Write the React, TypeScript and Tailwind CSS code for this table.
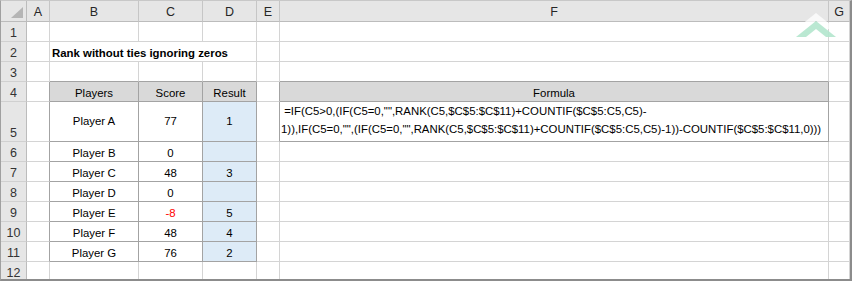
import React from 'react';

const letters = ['A', 'B', 'C', 'D', 'E', 'F', 'G'];

const table: Record<number, string[]> = {
  4: ['Players', 'Score', 'Result'],
  5: ['Player A', '77', '1'],
  6: ['Player B', '0', ''],
  7: ['Player C', '48', '3'],
  8: ['Player D', '0', ''],
  9: ['Player E', '-8', '5'],
  10: ['Player F', '48', '4'],
  11: ['Player G', '76', '2'],
};

const formula1 = ' =IF(C5>0,(IF(C5=0,"",RANK(C5,$C$5:$C$11)+COUNTIF($C$5:C5,C5)-';
const formula2 = '1)),IF(C5=0,"",(IF(C5=0,"",RANK(C5,$C$5:$C$11)+COUNTIF($C$5:C5,C5)-1))-COUNTIF($C$5:$C$11,0)))';

// c: 1 = A ... 7 = G
function borders(r: number, c: number) {
  const inTable = r >= 4 && r <= 11 && c >= 2 && c <= 4;
  const inFormula = (r === 4 || r === 5) && c === 6;
  const darkRight = inTable || inFormula || (c === 1 && r >= 4 && r <= 11) || (c === 5 && (r === 4 || r === 5));
  const darkBottom = inTable || inFormula || (r === 3 && ((c >= 2 && c <= 4) || c === 6));
  return `border-r border-b ${darkRight ? 'border-r-[#a3a3a3]' : 'border-r-[#d4d4d4]'} ${
    darkBottom ? 'border-b-[#a3a3a3]' : 'border-b-[#d4d4d4]'
  }`;
}

function bg(r: number, c: number) {
  if (r === 4 && ((c >= 2 && c <= 4) || c === 6)) return 'bg-[#d9d9d9]';
  if (r >= 5 && r <= 11 && c === 4) return 'bg-[#ddebf7]';
  return 'bg-white';
}

function Logo() {
  return (
    <svg className="absolute left-[790px] top-[6px]" width="50" height="34" viewBox="790 6 50 34">
      <polygon points="815,12 835,28 825,28 815,20 805,28 795,28" fill="#ffffff" opacity="0.75" />
      <polygon points="815,20 835,36 825,36 815,28 805,36 795,36" fill="#b2e6cd" opacity="0.9" />
    </svg>
  );
}

function Row({ r }: { r: number }) {
  const cells: React.ReactNode[] = [];
  cells.push(
    <div
      key="n"
      className="flex items-end justify-center pb-[1px] leading-[14px] text-[12.5px] bg-[#e6e6e6] text-[#333] border-r border-b border-r-[#bcbcbc] border-b-[#d0d0d0]"
    >
      {r}
    </div>
  );
  for (let c = 1; c <= 7; c++) {
    if (r === 2 && (c === 3 || c === 4)) continue;
    let content: React.ReactNode = null;
    let extra = 'items-end pb-[1px] leading-[13px]';
    if (r === 2 && c === 2) {
      content = <span className="font-bold whitespace-nowrap pl-[2px]">Rank without ties ignoring zeros</span>;
    } else if (table[r] && c >= 2 && c <= 4) {
      const v = table[r][c - 2];
      content = v;
      extra = `${r === 5 ? 'items-center' : 'items-end pb-[1px]'} justify-center leading-[13px] ${
        v === '-8' ? 'text-[#ff0000]' : ''
      }`;
    } else if (r === 4 && c === 6) {
      content = 'Formula';
      extra = 'items-end justify-center pb-[1px] leading-[13px]';
    } else if (r === 5 && c === 6) {
      content = (
        <div className="pl-[1px] leading-[18px] whitespace-pre">
          <div>{formula1}</div>
          <div>{formula2}</div>
        </div>
      );
      extra = 'items-start';
    }
    cells.push(
      <div
        key={c}
        className={`flex min-w-0 ${extra} ${borders(r, c)} ${bg(r, c)} ${r === 2 && c === 2 ? 'col-span-3' : ''}`}
      >
        {content}
      </div>
    );
  }
  return <>{cells}</>;
}

export default function App() {
  return (
    <div className="relative w-[852px] h-[281px] overflow-hidden bg-white border-l border-t border-r-2 border-b-2 border-l-[#a0a0a0] border-t-[#c8c8c8] border-r-[#8c8c8c] border-b-[#8c8c8c] font-['Liberation_Sans',Arial,sans-serif] text-[11.4px] text-black">
      <div className="grid grid-cols-[26px_23px_89px_64px_54px_23px_549px_21px] grid-rows-[21px_repeat(4,20px)_40px_repeat(7,20px)]">
        {/* column headers */}
        <div className="relative bg-[#e6e6e6] border-r border-b border-r-[#bcbcbc] border-b-[#bcbcbc]">
          <svg className="absolute right-[3px] bottom-[3px]" width="12" height="11" viewBox="0 0 12 11">
            <polygon points="12,0 12,11 0,11" fill="#b5b5b5" />
          </svg>
        </div>
        {letters.map((l) => (
          <div
            key={l}
            className="flex items-end justify-center pb-[2px] leading-[14px] text-[12.5px] bg-[#e6e6e6] text-[#262626] border-r border-b border-r-[#c6c6c6] border-b-[#bcbcbc]"
          >
            {l}
          </div>
        ))}
        {Array.from({ length: 12 }, (_, i) => (
          <Row key={i + 1} r={i + 1} />
        ))}
      </div>
      <Logo />
    </div>
  );
}
